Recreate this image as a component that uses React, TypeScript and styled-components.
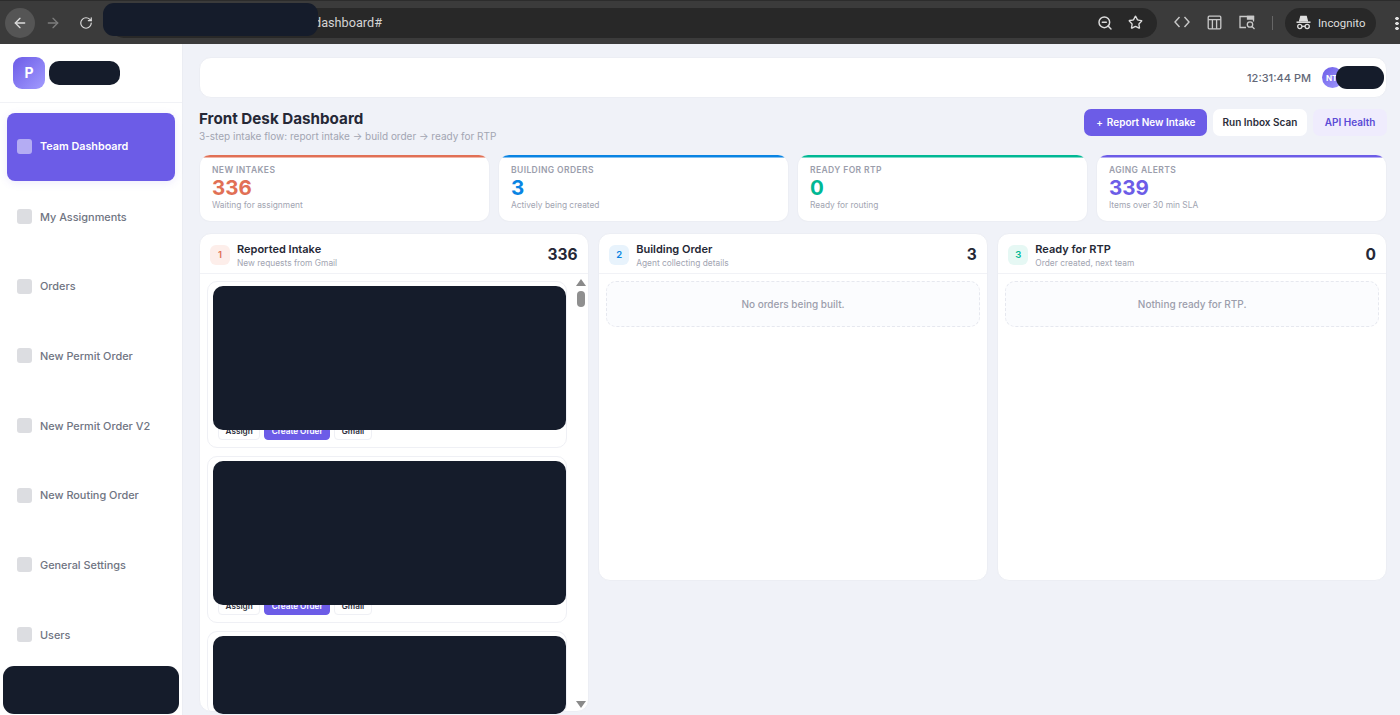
import React from "react";
import styled, { createGlobalStyle } from "styled-components";
import { ArrowLeft, ArrowRight, RotateCw, ZoomOut, Star } from "lucide-react";

const Global = createGlobalStyle`
  html, body { margin: 0; padding: 0; height: 715px; overflow: hidden; }
  body { font-family: Inter, "Liberation Sans", sans-serif; background: #f0f2f8; }
  * { box-sizing: border-box; }
`;

const Ink = "#151c2b";

const Page = styled.div`
  width: 1400px;
  height: 715px;
  display: flex;
  flex-direction: column;
  overflow: hidden;
  position: relative;
`;

const BrowserBar = styled.header`
  height: 44px;
  flex: none;
  background: #3b3b3b;
  border-top: 1px solid #2c2c2c;
  display: flex;
  align-items: center;
  padding: 0 0 0 5px;
  color: #d8d8d8;
  position: relative;
`;

const RoundButton = styled.span<{ $on?: boolean; $dim?: boolean }>`
  width: 30px;
  height: 30px;
  margin-right: 3px;
  border-radius: 50%;
  flex: none;
  display: flex;
  align-items: center;
  justify-content: center;
  background: ${(p) => (p.$on ? "#555555" : "transparent")};
  color: ${(p) => (p.$dim ? "#7d7d7d" : "#dcdcdc")};
`;

const AddressPill = styled.div`
  margin-left: 5px;
  width: 1048px;
  height: 30px;
  flex: none;
  border-radius: 15px;
  background: #282828;
  display: flex;
  align-items: center;
  padding: 0 0 0 205px;
  color: #d4d4d4;
`;

const Url = styled.span`
  flex: 1;
  font-family: Roboto, sans-serif;
  font-size: 12.7px;
`;

const PillIcon = styled.span`
  width: 30px;
  display: flex;
  justify-content: center;
  color: #dcdcdc;
`;

const PillIcons = styled.div`
  display: flex;
  margin-right: 7px;
`;

const ToolIcon = styled.span`
  width: 33px;
  flex: none;
  display: flex;
  justify-content: center;
  color: #c9c9c9;
`;

const ToolIcons = styled.div`
  display: flex;
  margin-left: 8px;
`;

const BarDivider = styled.span`
  width: 1px;
  height: 14px;
  margin: 0 12px 0 8px;
  background: #666;
`;

const IncognitoChip = styled.div`
  width: 91px;
  height: 30px;
  border-radius: 15px;
  background: #282828;
  display: flex;
  align-items: center;
  gap: 7px;
  padding-left: 11px;
  font-family: Roboto, sans-serif;
  font-size: 11.4px;
  color: #dedede;
`;

const Kebab = styled.span`
  width: 4px;
  height: 14px;
  margin-left: 19px;
  flex: none;
  background: radial-gradient(circle at center, #dedede 1.6px, transparent 1.9px) 0 0 / 4px 5px repeat-y;
`;

const UrlMask = styled.div`
  position: absolute;
  left: 103px;
  top: 2px;
  width: 215px;
  height: 33px;
  border-radius: 11px;
  background: ${Ink};
`;

const Body = styled.div`
  flex: 1;
  min-height: 0;
  display: flex;
`;

const Sidebar = styled.aside`
  width: 183px;
  flex: none;
  background: #fff;
  border-right: 1px solid #ebedf3;
  display: flex;
  flex-direction: column;
`;

const Brand = styled.div`
  height: 59px;
  flex: none;
  border-bottom: 1px solid #f1f2f6;
  display: flex;
  align-items: center;
  gap: 4px;
  padding: 0 0 1px 13px;
`;

const LogoMark = styled.div`
  width: 32px;
  height: 32px;
  border-radius: 9px;
  background: linear-gradient(135deg, #6c5ce7, #a29bfe);
  color: #fff;
  font-weight: 700;
  font-size: 14px;
  display: flex;
  align-items: center;
  justify-content: center;
`;

const BrandMask = styled.div`
  width: 71px;
  height: 24px;
  border-radius: 10px;
  background: ${Ink};
`;

const Nav = styled.nav`
  flex: 1 1 0;
  min-height: 0;
  display: flex;
  flex-direction: column;
  gap: 1.66px;
  padding: 10px 7px 0;
`;

const NavItem = styled.div<{ $active?: boolean }>`
  height: 68px;
  flex: none;
  border-radius: 8px;
  display: flex;
  align-items: center;
  gap: 8px;
  padding: 0 0 ${(p) => (p.$active ? "1px" : "0")} 10px;
  font-size: ${(p) => (p.$active ? "10.8px" : "10.9px")};
  font-weight: ${(p) => (p.$active ? 600 : 500)};
  color: ${(p) => (p.$active ? "#fff" : "#6f7482")};
  background: ${(p) => (p.$active ? "#6c5ce7" : "transparent")};
  box-shadow: ${(p) => (p.$active ? "0 2px 8px rgba(108,92,231,.12)" : "none")};
`;

const NavDot = styled.span<{ $active?: boolean }>`
  width: 15px;
  height: 15px;
  border-radius: 3px;
  flex: none;
  background: ${(p) => (p.$active ? "#b4acf3" : "#dcdde1")};
`;

const SideFooterMask = styled.div`
  height: 48px;
  margin: 0 3px 1px;
  flex: none;
  border-radius: 11px;
  background: ${Ink};
`;

const Main = styled.main`
  flex: 1;
  min-width: 0;
  padding: 13px 13px 3px 16px;
  display: flex;
  flex-direction: column;
`;

const TopBar = styled.div`
  height: 41px;
  flex: none;
  background: #fff;
  border-radius: 12px;
  border: 1px solid #eceef4;
  display: flex;
  align-items: center;
  justify-content: flex-end;
  padding-right: 2px;
`;

const Clock = styled.span`
  font-size: 11px;
  font-weight: 500;
  color: #636878;
  margin-right: 11px;
`;

const Avatar = styled.span`
  width: 21px;
  height: 21px;
  border-radius: 50%;
  background: linear-gradient(135deg, #6c5ce7, #a29bfe);
  color: #fff;
  font-size: 8px;
  font-weight: 700;
  display: flex;
  align-items: center;
  padding-left: 4px;
  overflow: visible;
`;

const UserMask = styled.span`
  width: 48px;
  height: 23px;
  margin-left: -7px;
  border-radius: 11px;
  background: ${Ink};
  position: relative;
`;

const HeadRow = styled.div`
  height: 57px;
  flex: none;
  display: flex;
  justify-content: space-between;
  padding-top: 11px;
`;

const TitleBlock = styled.div`
  padding-top: 1px;
`;

const Title = styled.h1`
  margin: 0;
  font-size: 15.2px;
  line-height: 18px;
  font-weight: 700;
  color: #252836;
`;

const Sub = styled.p`
  margin: 2px 0 0;
  font-size: 10px;
  line-height: 13px;
  color: #a2a5b2;
  font-weight: 400;
`;

const Actions = styled.div`
  display: flex;
  gap: 6px;
  height: 27px;
`;

const TopButton = styled.button<{ $kind: "primary" | "plain" | "soft" }>`
  border: 0;
  height: 27px;
  margin: 0;
  padding: ${(p) => (p.$kind === "soft" ? "0 11.500px 1px" : p.$kind === "plain" ? "0 10px 1px" : "0 11px 1px 9px")};
  display: flex;
  align-items: center;
  border-radius: 7px;
  font-family: inherit;
  font-size: 10px;
  font-weight: 600;
  color: ${(p) => (p.$kind === "primary" ? "#fff" : p.$kind === "plain" ? "#2b2d3a" : "#5b4bd6")};
  background: ${(p) => (p.$kind === "primary" ? "#6c5ce7" : p.$kind === "plain" ? "#fff" : "#efecfd")};
`;

const Plus = styled.span`
  margin: 0 4px 0 3px;
  font-weight: 500;
`;

const StatsGrid = styled.div`
  display: grid;
  grid-template-columns: repeat(4, 1fr);
  gap: 8px;
  height: 67px;
  flex: none;
  margin-bottom: 11px;
`;

const StatCard = styled.div<{ $tone: string }>`
  background: linear-gradient(${(p) => p.$tone}, ${(p) => p.$tone}) top / 100% 2.5px no-repeat, #fff;
  border-radius: 11px;
  border: 1px solid #eceef4;
  border-top: 0;
  padding: 10px 12px 0;
`;

const StatLabel = styled.div`
  font-size: 8.5px;
  line-height: 11px;
  font-weight: 600;
  letter-spacing: 0.4px;
  color: #9b9eac;
  text-transform: uppercase;
`;

const StatValue = styled.div<{ $tone: string }>`
  font-size: 20.5px;
  line-height: 26px;
  font-weight: 700;
  margin-top: -1px;
  color: ${(p) => p.$tone};
`;

const StatNote = styled.div`
  font-size: 8.4px;
  line-height: 11px;
  margin-top: -1px;
  color: #a2a5b2;
`;

const Board = styled.div`
  flex: 1;
  min-height: 0;
  display: grid;
  grid-template-columns: repeat(3, 1fr);
  gap: 9.5px;
`;

const Panel = styled.section<{ $short?: boolean }>`
  background: #fff;
  border-radius: 12px;
  border: 1px solid #eceef4;
  display: flex;
  flex-direction: column;
  min-height: 0;
  height: ${(p) => (p.$short ? "348px" : "auto")};
`;

const PanelHead = styled.div`
  height: 40px;
  flex: none;
  border-bottom: 1px solid #f1f2f6;
  display: flex;
  align-items: center;
  padding: 2px 10px 0 10px;
  gap: 7px;
`;

const StepBadge = styled.span<{ $bg: string; $fg: string }>`
  width: 20px;
  height: 20px;
  flex: none;
  border-radius: 6px;
  background: ${(p) => p.$bg};
  color: ${(p) => p.$fg};
  font-size: 9.5px;
  font-weight: 600;
  display: flex;
  align-items: center;
  justify-content: center;
`;

const HeadText = styled.div`
  flex: 1;
  padding-top: 3px;
`;

const PanelTitle = styled.div`
  font-size: 11px;
  line-height: 13px;
  font-weight: 600;
  color: #252836;
`;

const PanelSub = styled.div`
  font-size: 8.4px;
  line-height: 11px;
  color: #a2a5b2;
  margin-top: 2px;
`;

const Count = styled.span`
  font-size: 15.5px;
  font-weight: 700;
  color: #252836;
`;

const PanelBody = styled.div`
  flex: 1;
  min-height: 0;
  display: flex;
`;

const CardList = styled.div`
  flex: 1;
  min-width: 0;
  display: flex;
  flex-direction: column;
  gap: 8px;
  padding: 7px 0 0 7px;
`;

const IntakeCard = styled.article<{ $last?: boolean }>`
  height: ${(p) => (p.$last ? "84px" : "167px")};
  flex: none;
  width: 360px;
  border-radius: 10px;
  border: 1px solid #eff0f5;
  border-bottom-width: ${(p) => (p.$last ? "0" : "1px")};
  padding: 4px 0 0 5px;
`;

const CardMask = styled.div<{ $h: number }>`
  width: 353px;
  height: ${(p) => p.$h}px;
  border-radius: 10px;
  background: ${Ink};
  position: relative;
`;

const CardActions = styled.div`
  display: flex;
  gap: 4px;
  margin: -8px 0 0 5px;
`;

const MiniButton = styled.button<{ $primary?: boolean }>`
  height: 18px;
  padding: 0 6.5px;
  border-radius: 4px;
  border: 1px solid ${(p) => (p.$primary ? "#6c5ce7" : "#eff0f5")};
  background: ${(p) => (p.$primary ? "#6c5ce7" : "#fff")};
  color: ${(p) => (p.$primary ? "#fff" : "#2b2d3a")};
  font-family: inherit;
  font-size: 8.2px;
  font-weight: 600;
`;

const Scroll = styled.div`
  width: 14px;
  flex: none;
  display: flex;
  flex-direction: column;
  align-items: center;
  padding: 5px 0 3px;
`;

const ScrollArrow = styled.span<{ $down?: boolean }>`
  width: 0;
  height: 0;
  border-left: 5px solid transparent;
  border-right: 5px solid transparent;
  border-${(p) => (p.$down ? "top" : "bottom")}: 7px solid #8a8a8a;
`;

const ScrollThumb = styled.span`
  width: 8px;
  height: 16px;
  margin-top: 5px;
  border-radius: 4px;
  background: #8f8f8f;
`;

const ScrollFill = styled.span`
  flex: 1;
`;

const EmptyWrap = styled.div`
  padding: 7px 7px 0;
`;

const EmptyBox = styled.div`
  height: 46px;
  border-radius: 10px;
  border: 1px dashed #e6e8ef;
  background: #fbfcfe;
  display: flex;
  align-items: center;
  justify-content: center;
  font-size: 10px;
  font-weight: 500;
  color: #9b9eac;
`;

const navItems = [
  "Team Dashboard",
  "My Assignments",
  "Orders",
  "New Permit Order",
  "New Permit Order V2",
  "New Routing Order",
  "General Settings",
  "Users",
];

const stats = [
  { label: "New Intakes", value: "336", note: "Waiting for assignment", tone: "#e17055" },
  { label: "Building Orders", value: "3", note: "Actively being created", tone: "#0984e3" },
  { label: "Ready for RTP", value: "0", note: "Ready for routing", tone: "#00b894" },
  { label: "Aging Alerts", value: "339", note: "Items over 30 min SLA", tone: "#6c5ce7" },
];

const LayoutGlyph = () => (
  <svg width="15" height="15" viewBox="0 0 15 15" fill="none" stroke="currentColor" strokeWidth="1.3">
    <rect x="1.2" y="1.2" width="12.6" height="12.6" rx="1" />
    <path d="M1.2 4.6h12.6M5.4 4.6v9.2M9.6 4.6v9.2" />
  </svg>
);

const CodeGlyph = () => (
  <svg width="16" height="14" viewBox="0 0 16 14" fill="none" stroke="currentColor" strokeWidth="1.4">
    <path d="M5.5 2 1 7l4.5 5M10.500 2 15 7l-4.500 5" />
  </svg>
);

const TabSearchGlyph = () => (
  <svg width="17" height="15" viewBox="0 0 17 15" fill="none" stroke="currentColor" strokeWidth="1.3">
    <path d="M7 12.500H1V1.500h13.500v5" />
    <path d="M8.500 1.500h6v2.500h-6z" fill="currentColor" />
    <circle cx="11" cy="9.500" r="2.700" />
    <path d="m13 11.500 2.500 2.500" />
  </svg>
);

const IncognitoGlyph = () => (
  <svg width="15" height="15" viewBox="0 0 15 15" fill="none" stroke="currentColor" strokeWidth="1.3">
    <path d="M3.500 6.500 4.800 1.500h5.400l1.300 5" fill="currentColor" />
    <path d="M0.500 7.200h14" strokeWidth="1.500" />
    <circle cx="3.800" cy="11.500" r="2.100" />
    <circle cx="11.200" cy="11.500" r="2.100" />
    <path d="M5.900 11.300h3.200" />
  </svg>
);

const IntakeItem = ({ maskHeight, last }: { maskHeight: number; last?: boolean }) => (
  <IntakeCard $last={last}>
    <CardMask $h={maskHeight} />
    {!last && (
      <CardActions>
        <MiniButton>Assign</MiniButton>
        <MiniButton $primary>Create Order</MiniButton>
        <MiniButton>Gmail</MiniButton>
      </CardActions>
    )}
  </IntakeCard>
);

export default function App() {
  return (
    <Page>
      <Global />
      <BrowserBar>
        <RoundButton $on><ArrowLeft size={16} /></RoundButton>
        <RoundButton $dim><ArrowRight size={16} /></RoundButton>
        <RoundButton><RotateCw size={14} /></RoundButton>
        <AddressPill>
          <Url>dashboard#</Url>
          <PillIcons>
            <PillIcon><ZoomOut size={16} strokeWidth={2.2} /></PillIcon>
            <PillIcon><Star size={15} strokeWidth={2.2} /></PillIcon>
          </PillIcons>
        </AddressPill>
        <ToolIcons>
          <ToolIcon><CodeGlyph /></ToolIcon>
          <ToolIcon><LayoutGlyph /></ToolIcon>
          <ToolIcon><TabSearchGlyph /></ToolIcon>
        </ToolIcons>
        <BarDivider />
        <IncognitoChip><IncognitoGlyph />Incognito</IncognitoChip>
        <Kebab />
        <UrlMask />
      </BrowserBar>
      <Body>
        <Sidebar>
          <Brand>
            <LogoMark>P</LogoMark>
            <BrandMask />
          </Brand>
          <Nav>
            {navItems.map((label, i) => (
              <NavItem key={label} $active={i === 0}>
                <NavDot $active={i === 0} />
                {label}
              </NavItem>
            ))}
          </Nav>
          <SideFooterMask />
        </Sidebar>
        <Main>
          <TopBar>
            <Clock>12:31:44 PM</Clock>
            <Avatar>NT</Avatar>
            <UserMask />
          </TopBar>
          <HeadRow>
            <TitleBlock>
              <Title>Front Desk Dashboard</Title>
              <Sub>3-step intake flow: report intake → build order → ready for RTP</Sub>
            </TitleBlock>
            <Actions>
              <TopButton $kind="primary"><Plus>+</Plus>Report New Intake</TopButton>
              <TopButton $kind="plain">Run Inbox Scan</TopButton>
              <TopButton $kind="soft">API Health</TopButton>
            </Actions>
          </HeadRow>
          <StatsGrid>
            {stats.map((s) => (
              <StatCard key={s.label} $tone={s.tone}>
                <StatLabel>{s.label}</StatLabel>
                <StatValue $tone={s.tone}>{s.value}</StatValue>
                <StatNote>{s.note}</StatNote>
              </StatCard>
            ))}
          </StatsGrid>
          <Board>
            <Panel>
              <PanelHead>
                <StepBadge $bg="#fdeeea" $fg="#e17055">1</StepBadge>
                <HeadText>
                  <PanelTitle>Reported Intake</PanelTitle>
                  <PanelSub>New requests from Gmail</PanelSub>
                </HeadText>
                <Count>336</Count>
              </PanelHead>
              <PanelBody>
                <CardList>
                  <IntakeItem maskHeight={144} />
                  <IntakeItem maskHeight={144} />
                  <IntakeItem maskHeight={78} last />
                </CardList>
                <Scroll>
                  <ScrollArrow />
                  <ScrollThumb />
                  <ScrollFill />
                  <ScrollArrow $down />
                </Scroll>
              </PanelBody>
            </Panel>
            <Panel $short>
              <PanelHead>
                <StepBadge $bg="#e8f3fc" $fg="#0984e3">2</StepBadge>
                <HeadText>
                  <PanelTitle>Building Order</PanelTitle>
                  <PanelSub>Agent collecting details</PanelSub>
                </HeadText>
                <Count>3</Count>
              </PanelHead>
              <EmptyWrap><EmptyBox>No orders being built.</EmptyBox></EmptyWrap>
            </Panel>
            <Panel $short>
              <PanelHead>
                <StepBadge $bg="#e6f8f4" $fg="#00b894">3</StepBadge>
                <HeadText>
                  <PanelTitle>Ready for RTP</PanelTitle>
                  <PanelSub>Order created, next team</PanelSub>
                </HeadText>
                <Count>0</Count>
              </PanelHead>
              <EmptyWrap><EmptyBox>Nothing ready for RTP.</EmptyBox></EmptyWrap>
            </Panel>
          </Board>
        </Main>
      </Body>
    </Page>
  );
}
